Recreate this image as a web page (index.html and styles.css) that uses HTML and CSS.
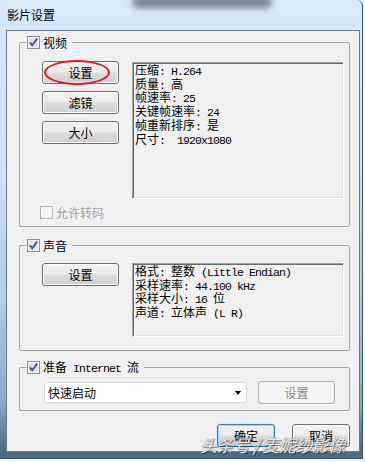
FILE: index.html
```html
<!DOCTYPE html>
<html>
    <head>
        <meta charset="utf-8">
        <title>影片设置</title>
        <link rel="stylesheet" href="styles.css">
    </head>
    <body>
        <div class="window">
            <div class="titlebar">
                <span class="glass-blur"></span>
                影片设置
            </div>
            <div class="client">
                <fieldset class="group group-video">
                    <legend>
                        <span class="legend-label">
                            <svg class="check" width="13" height="13" viewBox="0 0 13 13"><rect x="0.5" y="0.5" width="12" height="12" fill="#f6f6f6" stroke="#8e8f8f"/><rect x="2" y="2" width="9" height="9" fill="#dfe4ea"/><path d="M2.8 6.4 L5.2 9.2 L10.2 2.6" fill="none" stroke="#3b5596" stroke-width="1.9"/></svg>
                            <span>视频</span>
                        </span>
                    </legend>
                    <div class="group-body">
                        <div class="media-row">
                            <div class="btn-col">
                                <button class="btn circled">设置</button>
                                <button class="btn">滤镜</button>
                                <button class="btn">大小</button>
                            </div>
                            <div class="info info-video">
                                <div>压缩<span class="en">: H.264</span></div>
                                <div>质量<span class="en">: </span>高</div>
                                <div>帧速率<span class="en">: 25</span></div>
                                <div>关键帧速率<span class="en">: 24</span></div>
                                <div>帧重新排序<span class="en">: </span>是</div>
                                <div>尺寸<span class="en">:  1920x1080</span></div>
                            </div>
                        </div>
                        <label class="option disabled">
                            <svg class="check" width="13" height="13" viewBox="0 0 13 13"><rect x="0.5" y="0.5" width="12" height="12" fill="#f4f4f4" stroke="#b6b6b6"/></svg>
                            <span>允许转码</span>
                        </label>
                    </div>
                </fieldset>

                <fieldset class="group group-audio">
                    <legend>
                        <span class="legend-label">
                            <svg class="check" width="13" height="13" viewBox="0 0 13 13"><rect x="0.5" y="0.5" width="12" height="12" fill="#f6f6f6" stroke="#8e8f8f"/><rect x="2" y="2" width="9" height="9" fill="#dfe4ea"/><path d="M2.8 6.4 L5.2 9.2 L10.2 2.6" fill="none" stroke="#3b5596" stroke-width="1.9"/></svg>
                            <span>声音</span>
                        </span>
                    </legend>
                    <div class="group-body">
                        <div class="media-row">
                            <div class="btn-col">
                                <button class="btn">设置</button>
                            </div>
                            <div class="info info-audio">
                                <div>格式<span class="en">: </span>整数<span class="en"> (Little Endian)</span></div>
                                <div>采样速率<span class="en">: 44.100 kHz</span></div>
                                <div>采样大小<span class="en">: 16 </span>位</div>
                                <div>声道<span class="en">: </span>立体声<span class="en"> (L R)</span></div>
                            </div>
                        </div>
                    </div>
                </fieldset>

                <fieldset class="group group-stream">
                    <legend>
                        <span class="legend-label">
                            <svg class="check" width="13" height="13" viewBox="0 0 13 13"><rect x="0.5" y="0.5" width="12" height="12" fill="#f6f6f6" stroke="#8e8f8f"/><rect x="2" y="2" width="9" height="9" fill="#dfe4ea"/><path d="M2.8 6.4 L5.2 9.2 L10.2 2.6" fill="none" stroke="#3b5596" stroke-width="1.9"/></svg>
                            <span>准备<span class="en"> Internet </span>流</span>
                        </span>
                    </legend>
                    <div class="group-body stream-row">
                        <div class="combo">
                            <span>快速启动</span>
                            <span class="arrow"></span>
                        </div>
                        <button class="btn" disabled>设置</button>
                    </div>
                </fieldset>

                <div class="dialog-buttons">
                    <button class="btn btn-small default">确定</button>
                    <button class="btn btn-small">取消</button>
                </div>
            </div>
            <div class="watermark">头条号 / 麦妮纱影像</div>
        </div>
    </body>
</html>
```

FILE: styles.css
```css
html, body {
    height: 100%;
}
body {
    margin: 0;
    background-color: #fff;
    font-family: "Noto Sans CJK SC", sans-serif;
    font-size: 12px;
    color: #000;
    overflow: hidden;
}

.en {
    font-family: "Liberation Mono", monospace;
    font-size: 11.5px;
    letter-spacing: -0.9px;
    white-space: pre;
}

/* window frame */
.window {
    position: relative;
    width: 363px;
    height: 459px;
    box-sizing: border-box;
    padding: 0 2px 6px 6px;
    border-right: 1px solid #3e5164;
    border-bottom: 1px solid #3e5164;
    border-top-right-radius: 6px;
    background: linear-gradient(to bottom, #d8e9f8 0%, #cde2f5 35%, #b0cdea 65%, #86aad0 88%, #4f6a84 98%);
}

.titlebar {
    position: relative;
    height: 30px;
    line-height: 30px;
    padding-left: 1px;
    font-size: 12px;
}

.glass-blur {
    position: absolute;
    left: 126px;
    top: -4px;
    width: 140px;
    height: 12px;
    background: #2c3540;
    border-radius: 6px;
    opacity: 0.55;
    filter: blur(3px);
}

.client {
    height: 422px;
    box-sizing: border-box;
    border: 1px solid #6b7d8e;
    background-color: #f0f0f0;
    display: flex;
    flex-direction: column;
}

/* group boxes */
.group {
    margin: 0 9px 0 12px;
    padding: 0;
    min-width: 0;
    border: 1px solid #a8a8a8;
    border-radius: 2px;
}
.group legend {
    margin-left: 6px;
    padding: 0 5px 0 1px;
    height: 14px;
}
.legend-label {
    display: inline-flex;
    align-items: center;
    gap: 3px;
    height: 14px;
    line-height: 14px;
    white-space: nowrap;
}
.check {
    display: block;
    flex: none;
}

.group-video {
    margin-top: 4px;
}
.group-video .group-body {
    padding: 12px 5px 7px 22px;
}
.group-audio {
    margin-top: 11px;
}
.group-audio .group-body {
    padding: 11px 5px 13px 22px;
}
.group-stream {
    margin-top: 9px;
}

.media-row {
    display: flex;
    gap: 13px;
}
.btn-col {
    display: flex;
    flex-direction: column;
    gap: 7px;
}

.info {
    width: 212px;
    box-sizing: border-box;
    padding: 1px 0 0 2px;
    border: 1px solid;
    border-color: #a0a0a0 #fff #fff #a0a0a0;
    box-shadow: inset 1px 1px 0 #696969, inset -1px -1px 0 #e3e3e3;
    line-height: 11.7px;
    white-space: nowrap;
    overflow: hidden;
}
.info-video {
    margin-top: 1px;
    height: 137px;
}
.info-audio {
    height: 74px;
}

.option {
    display: flex;
    align-items: center;
    gap: 3px;
    margin: 7px 0 0 -2px;
    height: 13px;
    line-height: 13px;
}
.option.disabled {
    color: #a3a3a3;
}

/* buttons */
.btn {
    position: relative;
    width: 77px;
    height: 23px;
    padding: 0;
    box-sizing: border-box;
    border: 1px solid #707070;
    border-radius: 3px;
    background: linear-gradient(to bottom, #f2f2f2 0%, #ebebeb 48%, #dddddd 52%, #cfcfcf 100%);
    box-shadow: inset 0 0 0 1px #fbfbfb;
    font-family: "Noto Sans CJK SC", sans-serif;
    font-size: 12px;
    line-height: 20px;
    color: #000;
}
.btn[disabled] {
    background: #f4f4f4;
    border-color: #adb2b5;
    box-shadow: none;
    color: #8a8a8a;
}
.btn.default {
    border-color: #3c7fb1;
    box-shadow: inset 0 0 0 1px #8fdcf9, 0 0 2px #9fd8f4;
}

/* annotation drawn over the first button */
.circled::after {
    content: "";
    position: absolute;
    left: 1px;
    top: -2px;
    width: 66px;
    height: 25px;
    box-sizing: border-box;
    border: 2.5px solid #e3151d;
    border-radius: 50%;
}

.stream-row {
    display: flex;
    align-items: flex-start;
    gap: 11px;
    padding: 7px 0 6px 24px;
}
.combo {
    margin-top: 1px;
    width: 203px;
    height: 21px;
    box-sizing: border-box;
    padding: 0 4px 0 3px;
    border: 1px solid #dadada;
    border-radius: 2px;
    background: #fff;
    display: flex;
    align-items: center;
    justify-content: space-between;
}
.arrow {
    width: 0;
    height: 0;
    margin-right: 1px;
    border-left: 3.5px solid transparent;
    border-right: 3.5px solid transparent;
    border-top: 4px solid #000;
}

.dialog-buttons {
    display: flex;
    justify-content: flex-end;
    gap: 17px;
    margin: 13px 9px 0 0;
}
.btn-small {
    width: 58px;
}

.watermark {
    position: absolute;
    left: 200px;
    top: 432px;
    font-size: 17px;
    font-style: italic;
    letter-spacing: -0.5px;
    color: rgba(255, 255, 255, 0.88);
    text-shadow: 0 0 1px #555, 1px 1px 1px rgba(0, 0, 0, 0.5);
    white-space: pre;
}
```
